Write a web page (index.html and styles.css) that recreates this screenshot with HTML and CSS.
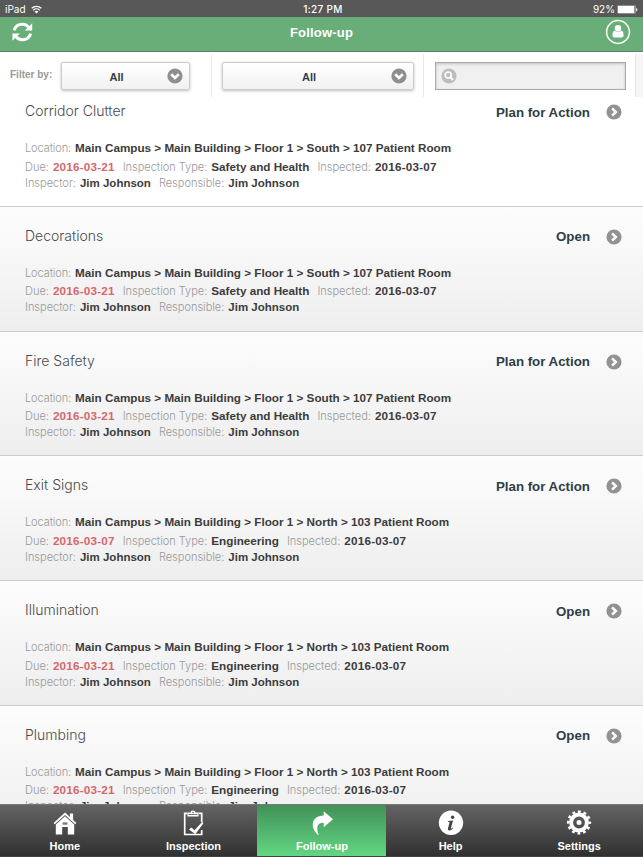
FILE: index.html
```html
<!DOCTYPE html>
<html lang="en">
<head>
  <meta charset="UTF-8" />
  <meta name="viewport" content="width=device-width, initial-scale=1.0"/>
  <title>Follow-up</title>
  <link rel="stylesheet" href="styles.css">
</head>
<body>
  <svg class="defs" width="0" height="0">
    <symbol id="arrow" viewBox="0 0 16 16">
      <circle cx="8" cy="8" r="7.6" fill="#929292"/>
      <path d="M6.1 4.4 9.8 8 6.1 11.6" fill="none" stroke="#fff" stroke-width="2.5"/>
    </symbol>
    <symbol id="down" viewBox="0 0 16 16">
      <circle cx="8" cy="8" r="7.6" fill="#8f8f8f"/>
      <path d="M4.2 6.2 8 9.9 11.8 6.2" fill="none" stroke="#fff" stroke-width="2.7"/>
    </symbol>
  </svg>
  <div class="app">
    <div class="status-bar">
      <div class="status-left">
        <span>iPad</span>
        <svg width="11" height="9" viewBox="0 0 11 9">
          <path d="M.7 3.2a7 7 0 0 1 9.6 0M2.3 5.2a4.6 4.6 0 0 1 6.4 0" fill="none" stroke="#fff" stroke-width="1.3"/>
          <path d="M3.6 6.6a2.7 2.7 0 0 1 3.8 0L5.5 8.6z" fill="#fff"/>
        </svg>
      </div>
      <div class="status-time">1:27 PM</div>
      <div class="status-right">
        <span>92%</span>
        <svg width="21" height="9" viewBox="0 0 21 9">
          <rect x=".4" y=".4" width="18.2" height="8.2" rx="1" fill="none" stroke="#bbb" stroke-width=".6"/>
          <rect x="1" y="1" width="16.4" height="7" fill="#fff"/>
          <path d="M19.2 3v3.4q1.2-.4 1.2-1.7T19.2 3z" fill="#fff"/>
        </svg>
      </div>
    </div>

    <div class="header">
      <svg class="refresh" width="21" height="20" viewBox="0 0 21 20">
        <path d="M2.2 8.3C3.2 4.5 6.5 2.2 10.2 2.2c2.6 0 4.7 1 6.2 2.9M18.6 11.6c-1 3.8-4.3 6.1-8.2 6.1-2.5 0-4.6-1-6-2.7" fill="none" stroke="#fff" stroke-width="3"/>
        <path d="M20.2 1.2v7.2h-7.4zM.4 18.8v-7.3h7.5z" fill="#fff"/>
      </svg>
      <h1>Follow-up</h1>
      <svg class="user" width="26" height="26" viewBox="0 0 26 26">
        <circle cx="13" cy="13" r="11.4" fill="none" stroke="#fff" stroke-width="1.5"/>
        <circle cx="13" cy="9.3" r="3.2" fill="#fff"/>
        <path d="M9.2 11.4q3.8 2.8 7.6 0 1.8 1 1.8 4.8 0 2.4-2 2.4H9.400q-2 0-2-2.400 0-3.800 1.800-4.800z" fill="#fff"/>
      </svg>
    </div>

    <div class="filters">
      <div class="filter filter-first">
        <label>Filter by:</label>
        <div class="select"><span>All</span><svg width="16" height="16"><use href="#down"/></svg></div>
      </div>
      <div class="filter filter-mid">
        <div class="select"><span>All</span><svg width="16" height="16"><use href="#down"/></svg></div>
      </div>
      <div class="filter filter-search">
        <div class="search">
          <svg width="16" height="16" viewBox="0 0 16 16">
            <circle cx="8" cy="8" r="7.6" fill="#bdbdbd"/>
            <circle cx="7.2" cy="7" r="3" fill="none" stroke="#fff" stroke-width="1.6"/>
            <path d="m9.400 9.300 2.800 2.800" stroke="#fff" stroke-width="2"/>
          </svg>
        </div>
      </div>
      <div class="filter-end"></div>
    </div>

    <div class="list">
      <div class="item">
        <div class="item-head"><h2>Corridor Clutter</h2><b>Plan for Action</b><svg width="16" height="16"><use href="#arrow"/></svg></div>
        <p class="location"><i>Location:</i><b>Main Campus &gt; Main Building &gt; Floor 1 &gt; South &gt; 107 Patient Room</b></p>
        <p class="due"><i>Due:</i><b class="date">2016-03-21</b><i>Inspection Type:</i><b>Safety and Health</b><i>Inspected:</i><b class="num">2016-03-07</b></p>
        <p class="people"><i>Inspector:</i><b>Jim Johnson</b><i>Responsible:</i><b>Jim Johnson</b></p>
      </div>
      <div class="item">
        <div class="item-head"><h2>Decorations</h2><b>Open</b><svg width="16" height="16"><use href="#arrow"/></svg></div>
        <p class="location"><i>Location:</i><b>Main Campus &gt; Main Building &gt; Floor 1 &gt; South &gt; 107 Patient Room</b></p>
        <p class="due"><i>Due:</i><b class="date">2016-03-21</b><i>Inspection Type:</i><b>Safety and Health</b><i>Inspected:</i><b class="num">2016-03-07</b></p>
        <p class="people"><i>Inspector:</i><b>Jim Johnson</b><i>Responsible:</i><b>Jim Johnson</b></p>
      </div>
      <div class="item">
        <div class="item-head"><h2>Fire Safety</h2><b>Plan for Action</b><svg width="16" height="16"><use href="#arrow"/></svg></div>
        <p class="location"><i>Location:</i><b>Main Campus &gt; Main Building &gt; Floor 1 &gt; South &gt; 107 Patient Room</b></p>
        <p class="due"><i>Due:</i><b class="date">2016-03-21</b><i>Inspection Type:</i><b>Safety and Health</b><i>Inspected:</i><b class="num">2016-03-07</b></p>
        <p class="people"><i>Inspector:</i><b>Jim Johnson</b><i>Responsible:</i><b>Jim Johnson</b></p>
      </div>
      <div class="item">
        <div class="item-head"><h2>Exit Signs</h2><b>Plan for Action</b><svg width="16" height="16"><use href="#arrow"/></svg></div>
        <p class="location"><i>Location:</i><b>Main Campus &gt; Main Building &gt; Floor 1 &gt; North &gt; 103 Patient Room</b></p>
        <p class="due"><i>Due:</i><b class="date">2016-03-07</b><i>Inspection Type:</i><b>Engineering</b><i>Inspected:</i><b class="num">2016-03-07</b></p>
        <p class="people"><i>Inspector:</i><b>Jim Johnson</b><i>Responsible:</i><b>Jim Johnson</b></p>
      </div>
      <div class="item">
        <div class="item-head"><h2>Illumination</h2><b>Open</b><svg width="16" height="16"><use href="#arrow"/></svg></div>
        <p class="location"><i>Location:</i><b>Main Campus &gt; Main Building &gt; Floor 1 &gt; North &gt; 103 Patient Room</b></p>
        <p class="due"><i>Due:</i><b class="date">2016-03-21</b><i>Inspection Type:</i><b>Engineering</b><i>Inspected:</i><b class="num">2016-03-07</b></p>
        <p class="people"><i>Inspector:</i><b>Jim Johnson</b><i>Responsible:</i><b>Jim Johnson</b></p>
      </div>
      <div class="item">
        <div class="item-head"><h2>Plumbing</h2><b>Open</b><svg width="16" height="16"><use href="#arrow"/></svg></div>
        <p class="location"><i>Location:</i><b>Main Campus &gt; Main Building &gt; Floor 1 &gt; North &gt; 103 Patient Room</b></p>
        <p class="due"><i>Due:</i><b class="date">2016-03-21</b><i>Inspection Type:</i><b>Engineering</b><i>Inspected:</i><b class="num">2016-03-07</b></p>
        <p class="people"><i>Inspector:</i><b>Jim Johnson</b><i>Responsible:</i><b>Jim Johnson</b></p>
      </div>
    </div>

    <div class="tabs">
      <div class="tab">
        <svg width="26" height="26" viewBox="0 0 26 26">
          <path d="M13 2.400 1.600 13l1.200 1.200L13 4.900l10.200 9.300 1.200-1.200-3.300-3.100V3.600h-3.200v3.300z" fill="#fff"/>
          <path d="M13 6.200 3.800 14.600V24.500h6.400V17h5.600v7.500h6.400v-9.900z" fill="#fff"/>
          <path d="M10.600 12.400h4.800v2.300h-4.800z" fill="#777"/>
        </svg>
        <span>Home</span>
      </div>
      <div class="tab">
        <svg width="26" height="26" viewBox="0 0 26 26">
          <path d="M7.500 3.400H4.700V24.500h17V20M18.500 3.400h3.200V12" fill="none" stroke="#fff" stroke-width="1.700"/>
          <path d="M7.500 2.500h3Q10.600.4 13 .4t2.500 2.100h3v4h-11z" fill="#fff"/>
          <circle cx="13" cy="2.500" r=".8" fill="#666"/>
          <path d="M8.500 4.500h9" stroke="#777"/>
          <path d="m9 19.600 2.300-2.200 3.200 2.800L22.300 11.800l1 1.600-8 10.800z" fill="#fff"/>
        </svg>
        <span>Inspection</span>
      </div>
      <div class="tab active">
        <svg width="26" height="26" viewBox="0 0 26 26">
          <path d="M14.700 1.300 24 9.200l-9.300 8v-4.500C8.500 12.600 6.500 17 9.900 25.200 1.700 20.200.4 5.900 14.700 5.500z" fill="#fff"/>
        </svg>
        <span>Follow-up</span>
      </div>
      <div class="tab">
        <svg width="26" height="26" viewBox="0 0 26 26">
          <circle cx="13" cy="12.800" r="12.200" fill="#fff"/>
          <circle cx="14.600" cy="7.300" r="1.700" fill="#444"/>
          <path d="m10.200 11 4.900-.6-2.200 7.700q-.1.900.6.500l1.200-1.100.5.500q-2 2.500-4 2.500-1.800-.1-1.300-2.100l1.600-5.700q.1-.8-1.500-.9z" fill="#444"/>
        </svg>
        <span>Help</span>
      </div>
      <div class="tab">
        <svg width="26" height="26" viewBox="0 0 26 26">
          <circle cx="13" cy="12.500" r="7.900" fill="none" stroke="#fff" stroke-width="4"/>
          <circle cx="13" cy="12.500" r="10.800" fill="none" stroke="#fff" stroke-width="2.600" stroke-dasharray="2.827 2.827" stroke-dashoffset="1.413"/>
          <circle cx="13" cy="12.500" r="2.500" fill="#fff"/>
        </svg>
        <span>Settings</span>
      </div>
    </div>
  </div>
</body>
</html>
```

FILE: styles.css
```css
* {
  box-sizing: border-box;
}
body {
  font-family: "Liberation Sans", Arial, sans-serif;
  margin: 0;
  padding: 0;
  background-color: #fff;
}
svg {
  display: block;
  flex: none;
}
.defs {
  display: none;
}
h1, h2, p {
  margin: 0;
}
.app {
  width: 643px;
  height: 857px;
  display: flex;
  flex-direction: column;
  overflow: hidden;
}
.status-bar {
  height: 17px;
  flex: none;
  display: grid;
  grid-template-columns: 1fr auto 1fr;
  align-items: center;
  padding: 0 5px;
  background: #585858;
  color: #fff;
  font-family: Inter, sans-serif;
  font-size: 10px;
  line-height: 18px;
}
.status-left, .status-right {
  display: flex;
  align-items: center;
  gap: 5px;
}
.status-left span {
  font-size: 10px;
}
.status-right {
  justify-content: flex-end;
  gap: 2px;
}
.status-time {
  font-weight: 500;
  letter-spacing: 0.3px;
  padding-left: 3px;
}
.header {
  height: 35px;
  flex: none;
  display: flex;
  justify-content: space-between;
  padding: 0 12px;
  background: #69ae79;
  border-bottom: 1px solid #63806a;
  color: #fff;
}
.header h1 {
  font-size: 13px;
  line-height: 31px;
  letter-spacing: 0.2px;
}
.header .refresh {
  margin: 5px 5px 0 0;
}
.header .user {
  margin-top: 2px;
}
.filters {
  height: 45px;
  flex: none;
  display: flex;
  padding-top: 2px;
  background: #fff;
}
.filter {
  display: flex;
  align-items: flex-start;
  padding-top: 8px;
  border-right: 1px solid #e9e9e9;
}
.filter-first {
  width: 212px;
  padding-left: 10px;
}
.filter-mid {
  width: 212px;
  padding-left: 10px;
}
.filter-search {
  width: 212px;
  padding-left: 11px;
}
.filter-end {
  flex: 1;
  background: #f6f6f6;
}
.filter label {
  width: 51px;
  color: #999;
  font-size: 10px;
  font-weight: bold;
  line-height: 26px;
}
.select {
  width: 192px;
  height: 28px;
  display: flex;
  align-items: center;
  padding: 0 6px 0 0;
  border: 1px solid #ccc;
  border-radius: 2px;
  background: linear-gradient(#fff, #f1f1f1);
  box-shadow: 0 1px 3px rgba(0,0,0,0.25);
  color: #2f3e46;
  font-size: 11px;
  font-weight: bold;
}
.filter-first .select {
  width: 129px;
}
.select span {
  flex: 1;
  text-align: center;
  padding: 1px 0 0 4px;
}
.search {
  width: 191px;
  height: 28px;
  padding: 5px;
  border: 1px solid #aaa;
  background: #f0f0f0;
  box-shadow: inset 0 1px 3px rgba(0,0,0,0.2);
}
.list {
  flex: 1;
  min-height: 0;
  overflow: hidden;
}
.item {
  height: 124.8px;
  padding: 20px 21px 0 25px;
  border-bottom: 1px solid #ccc;
  background: linear-gradient(#fdfdfd, #eee);
}
.item:first-child {
  margin-top: -15px;
  background: #fff;
}
.item-head {
  height: 20px;
  display: flex;
  align-items: center;
  margin-bottom: 18px;
}
.item-head h2 {
  flex: 1;
  color: #4a4a4a;
  font-family: Inter, sans-serif;
  font-size: 14px;
  font-weight: 300;
  padding-bottom: 3px;
}
.item-head b {
  margin-right: 16px;
  color: #2f3e46;
  font-size: 13.3px;
}
.item p {
  display: flex;
  height: 16px;
  line-height: 16px;
  font-size: 11.7px;
  white-space: nowrap;
}
.item .location {
  height: 18.5px;
}
.item .people {
  font-size: 11.5px;
}
.item p i {
  color: #999;
  font-family: Inter, sans-serif;
  font-size: 11px;
  font-style: normal;
  font-weight: 300;
  margin-right: 4px;
}
.item .location i {
  letter-spacing: -0.1px;
}
.item p b {
  color: #3c3c3c;
  margin-right: 8px;
}
.item p .date, .item p .num {
  letter-spacing: 0.2px;
}
.item p .date {
  color: #d4676d;
}
.tabs {
  height: 53px;
  flex: none;
  display: flex;
  border-top: 1px solid #777;
  border-bottom: 1px solid #444;
  background: linear-gradient(#646464, #303030);
}
.tab {
  flex: 1;
  display: flex;
  flex-direction: column;
  align-items: center;
  padding: 5px 0 0 1px;
  color: #fff;
  font-size: 11px;
  font-weight: bold;
}
.tab.active {
  background: linear-gradient(#429158, #62d682);
}
.tab span {
  line-height: 13px;
  margin-top: 4px;
}
```
